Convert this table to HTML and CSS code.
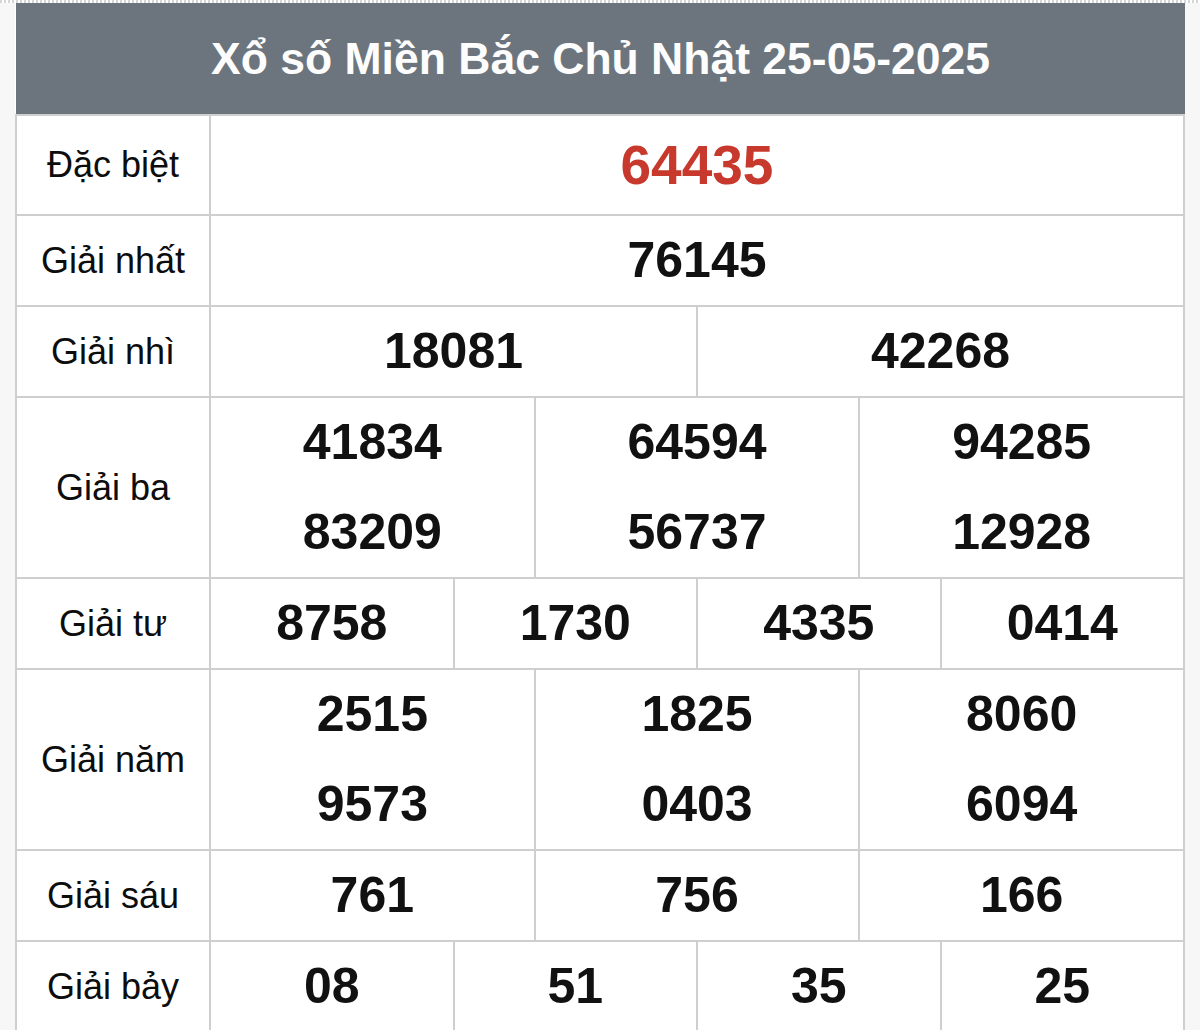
FILE: index.html
```html
<!DOCTYPE html>
<html lang="vi">
<head>
<meta charset="utf-8">
<title>Xổ số Miền Bắc</title>
<link rel="stylesheet" href="styles.css">
</head>
<body>
<div class="strip"></div>
<div class="board">
  <div class="title">Xổ số Miền Bắc Chủ Nhật 25-05-2025</div>
  <div class="body">
    <div class="row row-special">
      <div class="label">Đặc biệt</div>
      <div class="vals cols-1"><div class="cell"><span class="num special">64435</span></div></div>
    </div>
    <div class="row">
      <div class="label">Giải nhất</div>
      <div class="vals cols-1"><div class="cell"><span class="num">76145</span></div></div>
    </div>
    <div class="row">
      <div class="label">Giải nhì</div>
      <div class="vals cols-2">
        <div class="cell"><span class="num">18081</span></div>
        <div class="cell"><span class="num">42268</span></div>
      </div>
    </div>
    <div class="row row-double">
      <div class="label">Giải ba</div>
      <div class="vals cols-3">
        <div class="cell"><span class="num">41834</span><span class="num">83209</span></div>
        <div class="cell"><span class="num">64594</span><span class="num">56737</span></div>
        <div class="cell"><span class="num">94285</span><span class="num">12928</span></div>
      </div>
    </div>
    <div class="row">
      <div class="label">Giải tư</div>
      <div class="vals cols-4">
        <div class="cell"><span class="num">8758</span></div>
        <div class="cell"><span class="num">1730</span></div>
        <div class="cell"><span class="num">4335</span></div>
        <div class="cell"><span class="num">0414</span></div>
      </div>
    </div>
    <div class="row row-double">
      <div class="label">Giải năm</div>
      <div class="vals cols-3">
        <div class="cell"><span class="num">2515</span><span class="num">9573</span></div>
        <div class="cell"><span class="num">1825</span><span class="num">0403</span></div>
        <div class="cell"><span class="num">8060</span><span class="num">6094</span></div>
      </div>
    </div>
    <div class="row">
      <div class="label">Giải sáu</div>
      <div class="vals cols-3">
        <div class="cell"><span class="num">761</span></div>
        <div class="cell"><span class="num">756</span></div>
        <div class="cell"><span class="num">166</span></div>
      </div>
    </div>
    <div class="row">
      <div class="label">Giải bảy</div>
      <div class="vals cols-4">
        <div class="cell"><span class="num">08</span></div>
        <div class="cell"><span class="num">51</span></div>
        <div class="cell"><span class="num">35</span></div>
        <div class="cell"><span class="num">25</span></div>
      </div>
    </div>
  </div>
</div>
</body>
</html>
```

FILE: styles.css
```css
html, body {
  margin: 0;
  padding: 0;
}
body {
  background: #f7f7f7;
  font-family: "Liberation Sans", Arial, sans-serif;
  color: #111;
  height: 1030px;
  overflow: hidden;
}
.strip {
  height: 3px;
  background: repeating-linear-gradient(90deg, #d6d6d6 0 2px, #ffffff 2px 4px);
}
.board {
  width: 1170px;
  margin-left: 15px;
  background: #ffffff;
}
.title {
  height: 111px;
  margin-left: 1px;
  background: #6c757d;
  color: #fdfdfd;
  font-weight: bold;
  font-size: 44.5px;
  display: flex;
  align-items: center;
  justify-content: center;
}
.body {
  background: #cfcfcf;
  padding: 2px;
  display: flex;
  flex-direction: column;
  gap: 2px;
}
.row {
  display: grid;
  grid-template-columns: 192px 1fr;
  gap: 2px;
  min-height: 89px;
}
.row-special {
  min-height: 98px;
}
.row-double .num {
  line-height: 89.5px;
}
.label {
  background: #ffffff;
  font-size: 36px;
  color: #0d0d0d;
  display: flex;
  align-items: center;
  justify-content: center;
}
.vals {
  display: grid;
  gap: 2px;
}
.cols-1 { grid-template-columns: 1fr; }
.cols-2 { grid-template-columns: repeat(2, 1fr); }
.cols-3 { grid-template-columns: repeat(3, 1fr); }
.cols-4 { grid-template-columns: repeat(4, 1fr); }
.cell {
  background: #ffffff;
  display: flex;
  flex-direction: column;
  align-items: center;
  justify-content: center;
}
.num {
  font-weight: bold;
  font-size: 50px;
  line-height: 89px;
  color: #111;
}
.num.special {
  font-size: 55px;
  line-height: 98px;
  color: #c8392d;
}
```
